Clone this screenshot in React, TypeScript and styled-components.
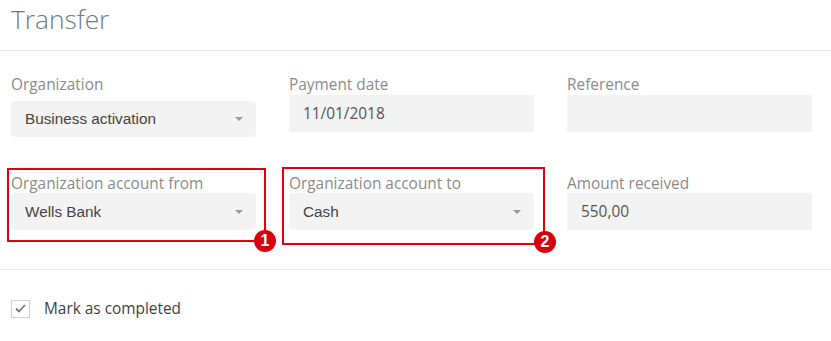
import styled, { createGlobalStyle } from 'styled-components';

const GlobalStyle = createGlobalStyle`
  body {
    margin: 0;
    background: #fff;
    font-family: "Open Sans", sans-serif;
  }
`;

const Page = styled.div`
  width: 831px;
  height: 341px;
  overflow: hidden;
  background: #fff;
`;

const Header = styled.header`
  height: 51px;
  border-bottom: 1px solid #e4e8ec;
  padding-left: 11px;
  box-sizing: border-box;
`;

const Title = styled.h1`
  margin: 0;
  padding-top: 1px;
  font-family: "Open Sans", sans-serif;
  font-weight: 300;
  font-size: 26.3px;
  line-height: 37px;
  color: #6b7b8a;
`;

const Form = styled.div`
  display: grid;
  grid-template-columns: repeat(3, 245px);
  column-gap: 33px;
  row-gap: 35px;
  padding: 22px 11px 0;
`;

const Cell = styled.div`
  position: relative;
  display: flex;
  flex-direction: column;
`;

const Label = styled.label`
  font-size: 15.4px;
  line-height: 20px;
  height: 19px;
  padding-top: 2px;
  overflow: visible;
  white-space: nowrap;
  color: #8a8a8a;
`;

const SelectBox = styled.div<{ $gap: number; $h: number }>`
  margin-top: ${({ $gap }) => $gap}px;
  height: ${({ $h }) => $h}px;
  border-radius: 4px;
  background: #f3f3f3;
  display: flex;
  align-items: center;
  justify-content: space-between;
  padding: 0 13px 0 14px;
  font-family: "Liberation Sans", Arial, sans-serif;
  font-size: 15.3px;
  color: #444;
`;

const Caret = styled.span`
  width: 0;
  height: 0;
  border-left: 4px solid transparent;
  border-right: 4px solid transparent;
  border-top: 4px solid #999;
`;

const InputBox = styled.div<{ $gap: number }>`
  margin-top: ${({ $gap }) => $gap}px;
  height: 37px;
  background: #f3f3f3;
  display: flex;
  align-items: center;
  padding-left: 14px;
  font-size: 15.4px;
  color: #555;
`;

const Highlight = styled.div<{ $l: number; $t: number; $w: number; $h: number }>`
  position: absolute;
  left: ${({ $l }) => $l}px;
  top: ${({ $t }) => $t}px;
  width: ${({ $w }) => $w}px;
  height: ${({ $h }) => $h}px;
  border: 2px solid #e2000f;
  box-sizing: border-box;
  pointer-events: none;
`;

const Badge = styled.span<{ $x: number; $y: number }>`
  position: absolute;
  left: ${({ $x }) => $x - 11}px;
  top: ${({ $y }) => $y - 11}px;
  width: 22px;
  height: 22px;
  border-radius: 50%;
  background: #d8000c;
  color: #fff;
  font-family: "Liberation Sans", Arial, sans-serif;
  font-weight: 700;
  font-size: 16px;
  line-height: 22px;
  text-align: center;
`;

const Divider = styled.hr`
  margin: 39px 0 0;
  border: 0;
  border-top: 1px solid #e8e8e8;
`;

const CheckRow = styled.label`
  display: flex;
  align-items: center;
  gap: 14px;
  padding: 28px 11px 0;
  font-size: 15.4px;
  color: #3f3f3f;
`;

const CheckBox = styled.span`
  width: 19px;
  height: 18px;
  box-sizing: border-box;
  border: 1px solid #d0d0d0;
  display: flex;
  align-items: center;
  justify-content: center;
`;

const Select = ({ value, gap, h = 36 }: { value: string; gap: number; h?: number }) => (
  <SelectBox $gap={gap} $h={h}>
    <span>{value}</span>
    <Caret />
  </SelectBox>
);

export default function App() {
  return (
    <Page>
      <GlobalStyle />
      <Header>
        <Title>Transfer</Title>
      </Header>
      <Form>
        <Cell>
          <Label>Organization</Label>
          <Select value="Business activation" gap={7} />
        </Cell>
        <Cell>
          <Label>Payment date</Label>
          <InputBox $gap={1}>11/01/2018</InputBox>
        </Cell>
        <Cell>
          <Label>Reference</Label>
          <InputBox $gap={1} />
        </Cell>

        <Cell>
          <Label>Organization account from</Label>
          <Select value="Wells Bank" gap={0} h={37} />
          <Highlight $l={-4} $t={-4} $w={259} $h={74} />
          <Badge $x={254} $y={69}>1</Badge>
        </Cell>
        <Cell>
          <Label>Organization account to</Label>
          <Select value="Cash" gap={0} h={37} />
          <Highlight $l={-7} $t={-5} $w={263} $h={78} />
          <Badge $x={256} $y={70}>2</Badge>
        </Cell>
        <Cell>
          <Label>Amount received</Label>
          <InputBox $gap={0}>550,00</InputBox>
        </Cell>
      </Form>
      <Divider />
      <CheckRow>
        <CheckBox>
          <svg width="11" height="9" viewBox="0 0 11 9">
            <polyline points="1,4.5 4,7.5 10,1" fill="none" stroke="#7a7a7a" strokeWidth="1.8" />
          </svg>
        </CheckBox>
        Mark as completed
      </CheckRow>
    </Page>
  );
}
